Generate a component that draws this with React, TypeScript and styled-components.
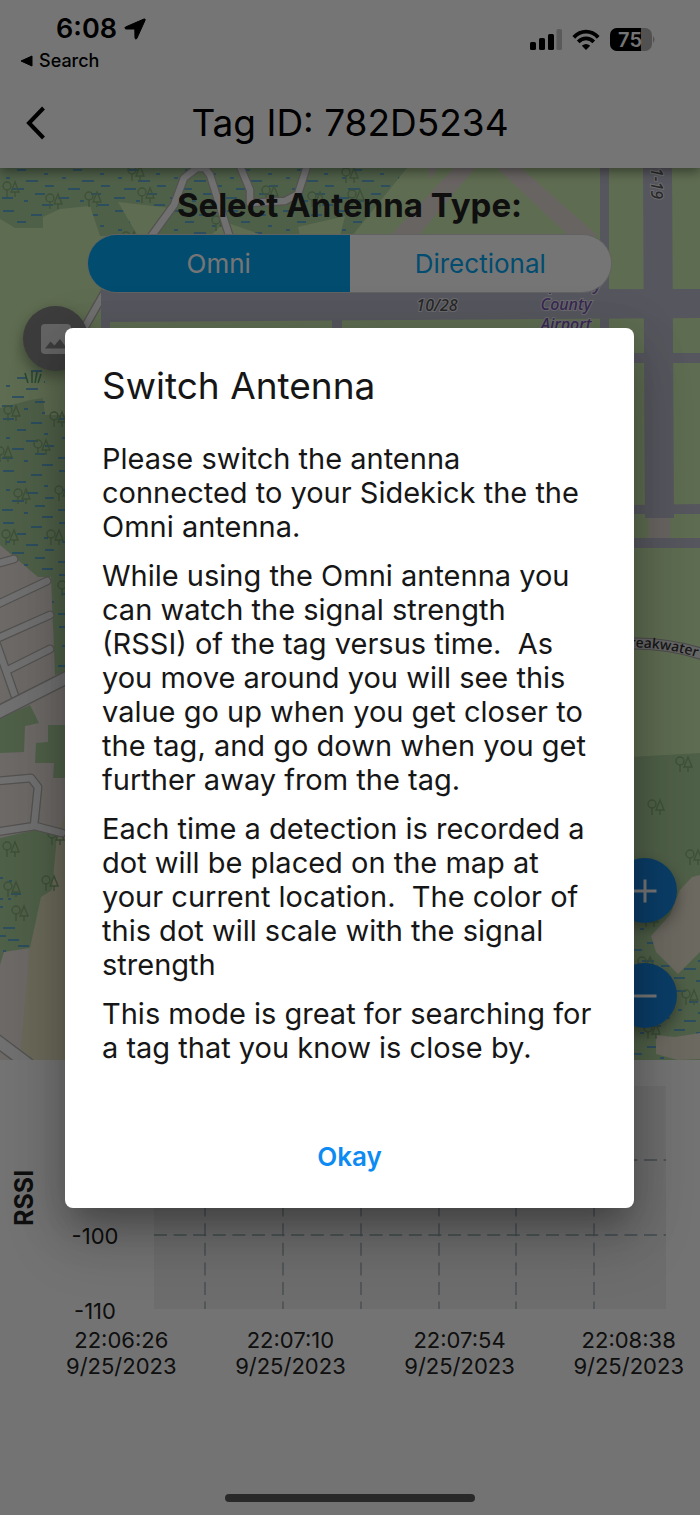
import React from "react";
import styled, { createGlobalStyle } from "styled-components";

const GlobalStyle = createGlobalStyle`
  * { box-sizing: border-box; }
  body { margin: 0; background: #fafafa; }
  body, button { font-family: Inter, "Liberation Sans", sans-serif; }
  h1, h2, p { margin: 0; }
  button { border: 0; padding: 0; background: none; cursor: pointer; }
`;

const Screen = styled.div`
  position: relative;
  display: flex;
  flex-direction: column;
  min-height: 100vh;
  overflow: hidden;
  color: #222;
`;

const Header = styled.header`
  position: relative;
  z-index: 1;
  height: 168px;
  background: #fff;
  color: #000;
  box-shadow: 0 4px 10px rgba(0, 0, 0, 0.4);
`;

const StatusBar = styled.div`
  display: flex;
  justify-content: space-between;
  height: 78px;
  padding: 12px 44px 0 20px;
`;

const Clock = styled.div`
  display: flex;
  align-items: center;
  gap: 7px;
  height: 34px;
  padding-left: 36px;
  font-size: 27px;
  line-height: 34px;
  font-weight: 600;
`;

const ReturnLink = styled.a`
  display: flex;
  align-items: center;
  gap: 6px;
  color: inherit;
  font-size: 18px;
  line-height: 30px;
  font-weight: 500;
  text-decoration: none;
`;

const StatusIcons = styled.div`
  display: flex;
  align-items: center;
  gap: 10px;
  height: 56px;
`;

const TitleRow = styled.div`
  display: grid;
  grid-template-columns: 72px 1fr 72px;
  align-items: center;
  height: 90px;
`;

const BackButton = styled.button`
  display: flex;
  align-items: center;
  justify-content: center;
  height: 72px;
`;

const PageTitle = styled.h1`
  font-size: 37px;
  line-height: 44px;
  font-weight: 400;
  text-align: center;
`;

const MapArea = styled.main`
  position: relative;
  flex: 1;
  min-height: 880px;
  overflow: hidden;
`;

const MapDrawing = styled.svg`
  position: absolute;
  inset: 0;
  width: 100%;
  height: 100%;
`;

const AntennaPicker = styled.section`
  position: relative;
  display: flex;
  flex-direction: column;
  align-items: center;
  gap: 9px;
  padding: 17px 88px 0 87px;
`;

const PickerTitle = styled.h2`
  font-size: 33px;
  line-height: 40px;
  font-weight: 700;
  white-space: nowrap;
`;

const Segments = styled.div`
  display: grid;
  grid-template-columns: 1fr 1fr;
  width: 100%;
  height: 59px;
  border: 1px solid #d6d6d6;
  border-radius: 30px;
  overflow: hidden;
`;

const Segment = styled.button<{ $active?: boolean }>`
  background: ${(p) => (p.$active ? "#03a5f2" : "#fff")};
  color: ${(p) => (p.$active ? "#fff" : "#03a5f2")};
  font-size: 26px;
  line-height: 32px;
`;

const MapButton = styled.button<{ $tone: string }>`
  position: absolute;
  display: flex;
  align-items: center;
  justify-content: center;
  width: 65px;
  height: 65px;
  border-radius: 50%;
  background: ${(p) => p.$tone};
  box-shadow: 0 6px 14px rgba(0, 0, 0, 0.35);
`;

const LayerButton = styled(MapButton)`
  left: 23px;
  top: 138px;
`;

const ZoomInButton = styled(MapButton)`
  right: 23px;
  bottom: 137px;
`;

const ZoomOutButton = styled(MapButton)`
  right: 23px;
  bottom: 32px;
`;

const ChartPanel = styled.section`
  display: flex;
  flex-direction: column;
  height: 455px;
  padding: 26px 0 13px;
  background: #fafafa;
`;

const ChartRow = styled.div`
  display: grid;
  grid-template-columns: 48px 106px 1fr;
  grid-template-rows: 223px;
  padding-right: 34px;
`;

const AxisTitle = styled.div`
  display: flex;
  align-items: center;
  justify-content: center;
  writing-mode: vertical-rl;
  transform: rotate(180deg);
  font-size: 25px;
  line-height: 48px;
  font-weight: 700;
`;

const ValueTicks = styled.div`
  display: flex;
  flex-direction: column;
  justify-content: flex-end;
  align-items: center;
  gap: 47px;
  height: 239px;
  padding-right: 12px;
  font-size: 22px;
  line-height: 28px;
`;

const Plot = styled.svg`
  width: 100%;
  height: 223px;
  background: #ededed;
`;

const TimeTicks = styled.div`
  display: flex;
  justify-content: space-between;
  padding: 18px 16px 0 66px;
  font-size: 22px;
  line-height: 26px;
  text-align: center;
`;

const TimeTick = styled.div`
  display: flex;
  flex-direction: column;
`;

const HomeBar = styled.div`
  align-self: center;
  width: 250px;
  height: 8px;
  margin-top: auto;
  border-radius: 4px;
  background: #5a5a5a;
`;

const Scrim = styled.div`
  position: absolute;
  inset: 0;
  z-index: 2;
  display: flex;
  align-items: center;
  justify-content: center;
  padding: 94px 66px 73px 65px;
  background: rgba(0, 0, 0, 0.54);
`;

const Dialog = styled.div`
  display: flex;
  flex-direction: column;
  width: 100%;
  padding: 36px 37px 16px;
  border-radius: 8px;
  background: #fff;
  color: #161616;
  box-shadow: 0 20px 28px -10px rgba(0, 0, 0, 0.22),
    0 32px 60px 4px rgba(0, 0, 0, 0.16), 0 10px 50px 8px rgba(0, 0, 0, 0.1);
`;

const DialogTitle = styled.h2`
  font-size: 37px;
  line-height: 44px;
  font-weight: 400;
`;

const DialogBody = styled.div`
  display: flex;
  flex-direction: column;
  gap: 15px;
  margin: 34px -16px 55px 0;
`;

const Paragraph = styled.p`
  font-size: 29px;
  line-height: 34px;
  white-space: pre-line;
`;

const OkayButton = styled.button`
  align-self: center;
  width: 112px;
  height: 72px;
  color: #0d8bf2;
  font-size: 26px;
  font-weight: 600;
`;

const TREES: [number, number][] = [
  [3, 182], [46, 194], [85, 192], [138, 188], [128, 166], [262, 186], [342, 168],
  [308, 192], [348, 190], [122, 232], [212, 216], [34, 440], [14, 489], [55, 486],
  [47, 530], [2, 530], [58, 581], [-4, 447], [4, 406], [50, 412], [3, 842], [42, 876],
  [4, 882], [12, 906], [48, 830], [676, 757], [648, 800], [686, 850], [642, 912],
  [682, 990], [644, 1024], [638, 957],
];

const MapPicture = () => (
  <MapDrawing viewBox="0 168 700 892" preserveAspectRatio="xMidYMin slice" aria-hidden="true">
    <defs>
      <pattern id="marsh" width="56" height="52" patternUnits="userSpaceOnUse">
        <path
          d="M3 3h11M31 7h11M17 14h9M44 18h4M6 22h4M26 25h12M45 30h9M12 33h12M35 38h10M2 42h11M24 45h4M42 49h11"
          stroke="#4a9de0"
          strokeWidth="1.6"
          fill="none"
        />
      </pattern>
      <g id="trees" fill="none" stroke="#87b07b" strokeWidth="1.4">
        <circle cx="4" cy="4" r="4" />
        <path d="M4 8v7M12 0l-4 10h8zM12 10v5" />
      </g>
    </defs>
    <rect y="168" width="700" height="892" fill="#cdebb0" />

    <g fill="#add19e">
      <path d="M0 168H407L352 236H100L90 206L60 209L43 217V228H15L0 219Z" />
      <path d="M0 408L30 400L43 398L45 415H70V690H0Z" />
      <path d="M630 757L700 753V1060H630Z" />
    </g>
    <g fill="url(#marsh)">
      <path d="M0 168H407L352 236H100L90 206L60 209L43 217V228H15L0 219Z" />
      <path d="M14 370H45V415H70V690H0V390Z" />
      <path d="M630 925H652L700 950V1060H630Z" />
    </g>
    <path
      d="M118 202L170 208L155 236H138ZM210 236L225 222L265 236ZM298 227L345 216L340 236H300Z"
      fill="#cdebb0"
    />

    <path d="M0 545L38 577H51L55 675L70 670V820L57 835L41 897L30 948L20 1060H0Z" fill="#ebe4de" />
    <path d="M65 815L57 835L52 890L41 897L30 948L20 1060H70V815Z" fill="#e6e5c2" />
    <g fill="#add19e">
      <path d="M0 718L30 705L39 723L25 726L24 752L0 753Z" />
      <path d="M48 725H70V778H53L54 763H35L36 743L48 742Z" />
      <path d="M0 838L35 830L57 835L52 890L41 897L30 948L4 952L0 965Z" />
    </g>
    <path
      d="M0 878h3M9 881h3M11 894h10M0 899h3M8 899h3M0 907h3M3 928h12M0 936h6M8 940h11M18 946h11M3 951h3"
      stroke="#4a9de0"
      strokeWidth="1.6"
    />
    <path
      d="M700 875L692 877L680 890L670 915L651 936L656 952L678 974L700 952ZM656 1035L675 1037L700 1033V1059L678 1060L656 1054Z"
      fill="#ebe4d2"
    />

    {TREES.map(([x, y]) => (
      <use key={`${x}-${y}`} href="#trees" x={x} y={y} />
    ))}
    <path d="M28 383l-3-10M32 383v-12M35 383l2-11M38 383l3-9" stroke="#5aa573" strokeWidth="1.6" fill="none" />

    <g fill="none" strokeLinejoin="round" strokeLinecap="round">
      {[
        { stroke: "#b5b2ae", strokeWidth: 9 },
        { stroke: "#f6f4f4", strokeWidth: 6.5 },
      ].map((casing) => (
        <g key={casing.stroke} {...casing}>
          <path d="M150 238L174 205L184 178L197 168H205L210 175L230 238" />
          <path d="M240 166L250 190L250 203L285 201L298 194L307 166" />
          <path d="M82 332L106 290" />
          <path d="M-4 564L14 559M-4 605L47 581M-4 639L50 615M8 670L50 649M-3 645L16 699" />
          <path d="M-4 781L31 778L38 787L34 826M-4 832L35 826L62 833" />
        </g>
      ))}
      <path d="M-5 714L70 676M-4 1040L28 1064" stroke="#b5b2ae" strokeWidth="14" />
      <path d="M-5 714L70 676M-4 1040L28 1064" stroke="#f6f4f4" strokeWidth="11" />
      <path d="M600 646Q655 638 705 655" stroke="#a2a2a2" strokeWidth="12" />
      <path d="M600 646Q655 638 705 655" stroke="#dedede" strokeWidth="10" />
    </g>

    <path
      d="M454 168H475L418 236H390ZM497 168H521L598 236H569ZM428 168H437L431 180ZM649 518H670V539H649Z"
      fill="#e3d9d6"
    />
    <g fill="#bbbbcc">
      <path d="M643 168H672L674 518H645Z" />
      <path d="M600 168H609V340H600ZM101 290L700 289V318L101 322ZM101 300H110V340H101ZM332 300H342V340H332Z" />
      <path d="M630 353H700V363H630ZM630 505L700 504V514H630ZM630 538H700V548H630Z" />
    </g>

    <g
      fontFamily='"Noto Sans", "Open Sans", sans-serif'
      fontSize="16"
      fontStyle="italic"
      fontWeight="500"
      textAnchor="middle"
      stroke="#e8e8ee"
      strokeWidth="2"
      paintOrder="stroke"
    >
      <text x="437" y="311" fill="#585858">10/28</text>
      <g fill="#7a58b4">
        <text x="566" y="290">Cape May</text>
        <text x="566" y="310">County</text>
        <text x="566" y="330">Airport</text>
      </g>
      <text transform="translate(651 179) rotate(90)" fill="#585858">01-19</text>
    </g>
    <path id="breakwater" d="M597 650Q655 642 702 659" fill="none" />
    <text
      fontFamily='"Noto Sans", "Open Sans", sans-serif'
      fontSize="14"
      fontWeight="500"
      fill="#333"
    >
      <textPath href="#breakwater" startOffset="95%" textAnchor="end">Breakwater</textPath>
    </text>
  </MapDrawing>
);

const LocationArrow = () => (
  <svg width="22" height="22" viewBox="0 0 22 22" aria-hidden="true">
    <path
      d="M20 1L1.500 9q-1.500 1.200.3 2h9l.2 9.300q.8 1.500 1.800.2L21.200 2q.2-1.300-1.200-1z"
      fill="#000"
      stroke="#000"
      strokeLinejoin="round"
    />
  </svg>
);

const SignalIcon = () => (
  <svg width="32" height="22" viewBox="0 0 32 22" aria-hidden="true">
    <rect x="0" y="13" width="6" height="8" rx="1.6" />
    <rect x="9" y="9" width="6" height="12" rx="1.6" />
    <rect x="18" y="5" width="6" height="16" rx="1.6" />
    <rect x="26.500" y="0" width="5.500" height="21" rx="1.6" fill="#c4c4c4" />
  </svg>
);

const WifiIcon = () => (
  <svg width="28" height="22" viewBox="0 0 28 22" aria-hidden="true">
    <g fill="none" stroke="#000" strokeWidth="3.8">
      <path d="M1.8 8.4Q7.2 2.7 14 2.7T26.2 8.4" />
      <path d="M6.2 12.9Q9.7 9.4 14 9.4T21.8 12.9" />
    </g>
    <path d="M9.8 16.8Q14 13.4 18.2 16.8L14 21z" />
  </svg>
);

const BatteryIcon = () => (
  <svg width="46" height="24" viewBox="0 0 46 24" role="img" aria-label="Battery">
    <clipPath id="charge">
      <rect width="31" height="24" />
    </clipPath>
    <rect width="42" height="23" rx="7" fill="#b0b0b0" />
    <rect width="42" height="23" rx="7" clipPath="url(#charge)" />
    <path d="M43 8q3 3.500 0 7z" fill="#b0b0b0" />
    <text x="20" y="18.500" fontSize="20" fontWeight="600" textAnchor="middle" fill="#fff">75</text>
  </svg>
);

const GRID_X = [51, 129, 207, 285, 362, 440];
const GRID_Y = [74, 149];
const TIMES = ["22:06:26", "22:07:10", "22:07:54", "22:08:38"];

const MESSAGE = [
  "Please switch the antenna\nconnected to your Sidekick the the\nOmni antenna.",
  "While using the Omni antenna you\ncan watch the signal strength\n(RSSI) of the tag versus time. \u00a0As\nyou move around you will see this\nvalue go up when you get closer to\nthe tag, and go down when you get\nfurther away from the tag.",
  "Each time a detection is recorded a\ndot will be placed on the map at\nyour current location. \u00a0The color of\nthis dot will scale with the signal\nstrength",
  "This mode is great for searching for\na tag that you know is close by.",
];

export default function App() {
  return (
    <Screen>
      <GlobalStyle />
      <Header>
        <StatusBar>
          <div>
            <Clock>
              6:08 <LocationArrow />
            </Clock>
            <ReturnLink href="#search">
              <svg width="13" height="12" viewBox="0 0 13 12" aria-hidden="true">
                <path d="M1 6L12 1v10z" stroke="#000" strokeLinejoin="round" />
              </svg>
              Search
            </ReturnLink>
          </div>
          <StatusIcons>
            <SignalIcon />
            <WifiIcon />
            <BatteryIcon />
          </StatusIcons>
        </StatusBar>
        <TitleRow>
          <BackButton aria-label="Back">
            <svg width="20" height="34" viewBox="0 0 20 34" aria-hidden="true">
              <path d="M17.500 2L3 17L17.500 32" fill="none" stroke="#000" strokeWidth="4" />
            </svg>
          </BackButton>
          <PageTitle>Tag ID: 782D5234</PageTitle>
        </TitleRow>
      </Header>

      <MapArea>
        <MapPicture />
        <AntennaPicker>
          <PickerTitle>Select Antenna Type:</PickerTitle>
          <Segments>
            <Segment $active>Omni</Segment>
            <Segment>Directional</Segment>
          </Segments>
        </AntennaPicker>
        <LayerButton $tone="#858585" aria-label="Map layers">
          <svg width="30" height="30" viewBox="0 0 30 30" aria-hidden="true">
            <rect width="30" height="30" rx="4" fill="#dcdcdc" />
            <path d="M4 24.500L9.500 17.500L13.500 21.500L19 15L26 24.500Z" fill="#858585" />
          </svg>
        </LayerButton>
        <ZoomInButton $tone="#1a86e0" aria-label="Zoom in">
          <svg width="24" height="24" viewBox="0 0 24 24" aria-hidden="true">
            <path d="M12 0.500V23.500M0.500 12H23.500" stroke="#fff" strokeWidth="3" />
          </svg>
        </ZoomInButton>
        <ZoomOutButton $tone="#1a86e0" aria-label="Zoom out">
          <svg width="24" height="24" viewBox="0 0 24 24" aria-hidden="true">
            <path d="M0.500 12H23.500" stroke="#fff" strokeWidth="3" />
          </svg>
        </ZoomOutButton>
      </MapArea>

      <ChartPanel>
        <ChartRow>
          <AxisTitle>RSSI</AxisTitle>
          <ValueTicks>
            <span>-100</span>
            <span>-110</span>
          </ValueTicks>
          <Plot viewBox="0 0 512 223" preserveAspectRatio="none" role="img" aria-label="Signal strength over time">
            <g stroke="#93a5ae" strokeWidth="1.300" strokeDasharray="13 6.6">
              {GRID_Y.map((y) => (
                <line key={y} x1="0" x2="512" y1={y} y2={y} />
              ))}
              {GRID_X.map((x) => (
                <line key={x} x1={x} x2={x} y1="0" y2="223" />
              ))}
            </g>
          </Plot>
        </ChartRow>
        <TimeTicks>
          {TIMES.map((time) => (
            <TimeTick key={time}>
              <span>{time}</span>
              <span>9/25/2023</span>
            </TimeTick>
          ))}
        </TimeTicks>
        <HomeBar />
      </ChartPanel>

      <Scrim>
        <Dialog role="dialog" aria-modal="true" aria-labelledby="dialog-title">
          <DialogTitle id="dialog-title">Switch Antenna</DialogTitle>
          <DialogBody>
            {MESSAGE.map((text) => (
              <Paragraph key={text}>{text}</Paragraph>
            ))}
          </DialogBody>
          <OkayButton>Okay</OkayButton>
        </Dialog>
      </Scrim>
    </Screen>
  );
}
